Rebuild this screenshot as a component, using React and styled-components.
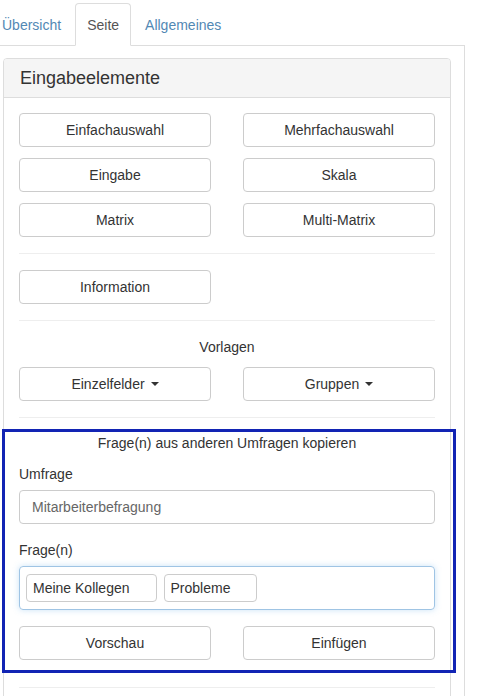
import styled, { createGlobalStyle } from "styled-components";

const GlobalStyle = createGlobalStyle`
  html, body {
    margin: 0;
    padding: 0;
    background: #fff;
    overflow: hidden;
  }

  body {
    font-family: "Liberation Sans", Arial, sans-serif;
    font-size: 14px;
    color: #333;
  }
`;

const tabs = ["Übersicht", "Seite", "Allgemeines"];

const App = () => {
  return (
    <>
      <GlobalStyle />
      <Page>
        <TabList>
          {tabs.map((t) => (
            <Tab key={t} $active={t === "Seite"}>
              {t}
            </Tab>
          ))}
        </TabList>
        <TabContent>
          <Panel>
            <PanelHeader>Eingabeelemente</PanelHeader>
            <PanelBody>
              <ButtonGrid>
                <Button>Einfachauswahl</Button>
                <Button>Mehrfachauswahl</Button>
                <Button>Eingabe</Button>
                <Button>Skala</Button>
                <Button>Matrix</Button>
                <Button>Multi-Matrix</Button>
              </ButtonGrid>
              <Divider />
              <ButtonGrid>
                <Button>Information</Button>
              </ButtonGrid>
              <Divider />
              <SectionTitle $gap={10}>Vorlagen</SectionTitle>
              <ButtonGrid>
                <Button>
                  Einzelfelder <Caret />
                </Button>
                <Button>
                  Gruppen <Caret />
                </Button>
              </ButtonGrid>
              <Divider $tight />
              <Highlight>
                <SectionTitle>Frage(n) aus anderen Umfragen kopieren</SectionTitle>
                <Label $top={11}>Umfrage</Label>
                <Input>Mitarbeiterbefragung</Input>
                <Label $top={16}>Frage(n)</Label>
                <TagInput>
                  <Tag>Meine Kollegen</Tag>
                  <Tag>Probleme</Tag>
                </TagInput>
                <ButtonGrid $top={16}>
                  <Button>Vorschau</Button>
                  <Button>Einfügen</Button>
                </ButtonGrid>
              </Highlight>
              <Divider $top={14} />
            </PanelBody>
          </Panel>
        </TabContent>
      </Page>
    </>
  );
};

export default App;

const Page = styled.div`
  margin: 3px 0 0 -10px;
  width: 475px;
`;

const TabList = styled.ul`
  display: flex;
  margin: 0;
  padding: 0;
  list-style: none;
  border-bottom: 1px solid #ddd;
`;

const Tab = styled.li`
  height: 41px;
  margin: 0 2px -1px 0;
  padding: 0 11px;
  display: flex;
  align-items: center;
  border: 1px solid ${(p) => (p.$active ? "#ddd" : "transparent")};
  border-bottom-color: ${(p) => (p.$active ? "#fff" : "transparent")};
  border-radius: 4px 4px 0 0;
  background: ${(p) => (p.$active ? "#fff" : "transparent")};
  color: ${(p) => (p.$active ? "#555" : "#5288b4")};
  font-size: 14px;
`;

const TabContent = styled.div`
  border: 1px solid #ddd;
  border-top: none;
  padding: 12px 13px 40px 12px;
  min-height: 700px;
`;

const Panel = styled.div`
  border: 1px solid #ddd;
  border-radius: 4px;
  background: #fff;
`;

const PanelHeader = styled.div`
  height: 38px;
  padding: 0 16px;
  display: flex;
  align-items: center;
  background: #f5f5f5;
  border-bottom: 1px solid #ddd;
  border-radius: 3px 3px 0 0;
  font-size: 18px;
  color: #333;
`;

const PanelBody = styled.div`
  padding: 15px;
`;

const ButtonGrid = styled.div`
  display: grid;
  grid-template-columns: 1fr 1fr;
  column-gap: 32px;
  row-gap: 11px;
  margin-top: ${(p) => p.$top || 0}px;
`;

const Button = styled.button`
  height: 34px;
  display: flex;
  align-items: center;
  justify-content: center;
  gap: 4px;
  padding: 0 12px;
  border: 1px solid #ccc;
  border-radius: 4px;
  background: #fff;
  font-family: inherit;
  font-size: 14px;
  color: #333;
`;

const Caret = styled.span`
  display: inline-block;
  width: 0;
  height: 0;
  margin-left: 2px;
  border-top: 4px solid #333;
  border-left: 4px solid transparent;
  border-right: 4px solid transparent;
`;

const Divider = styled.div`
  height: 1px;
  background: #eee;
  margin: ${(p) => (p.$top != null ? p.$top : 16)}px 0 ${(p) => (p.$tight ? 0 : 16)}px;
`;

const SectionTitle = styled.div`
  text-align: center;
  line-height: 20px;
  margin-bottom: ${(p) => p.$gap || 0}px;
`;

const Highlight = styled.div`
  margin: 11px -21px 0 -17px;
  padding: 1px 18px 10px 14px;
  border: 3px solid #1224b4;
`;

const Label = styled.div`
  line-height: 20px;
  margin: ${(p) => p.$top}px 0 6px;
`;

const Input = styled.div`
  height: 34px;
  display: flex;
  align-items: center;
  padding: 0 12px;
  border: 1px solid #ccc;
  border-radius: 4px;
  color: #666;
  box-sizing: border-box;
`;

const TagInput = styled.div`
  height: 44px;
  box-sizing: border-box;
  display: flex;
  align-items: center;
  gap: 7px;
  padding: 0 6px;
  border: 1px solid #9fc4e4;
  border-radius: 4px;
  box-shadow: 0 0 6px rgba(102, 175, 233, 0.35);
`;

const Tag = styled.span`
  height: 28px;
  box-sizing: border-box;
  display: flex;
  align-items: center;
  padding: 0 26px 0 6px;
  border: 1px solid #ccc;
  border-radius: 4px;
  color: #333;
`;
